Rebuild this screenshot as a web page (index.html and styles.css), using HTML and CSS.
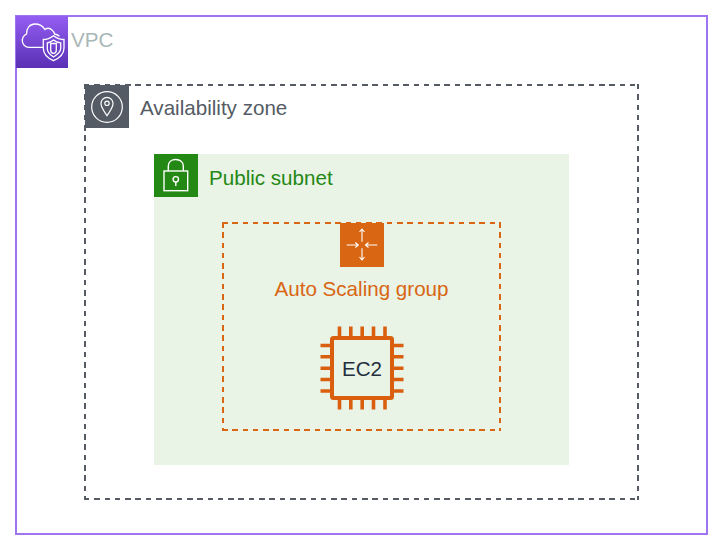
FILE: index.html
```html
<!DOCTYPE html>
<html lang="en">
<head>
<meta charset="utf-8">
<title>VPC diagram</title>
<link rel="stylesheet" href="styles.css">
</head>
<body>
<section class="vpc">
  <header class="head head-vpc">
    <div class="badge badge-vpc">
      <svg viewBox="0 0 52 52" width="52" height="52" fill="none" stroke="#fff" stroke-width="1.3">
        <path d="M27 31.300H13C9 31.300 6.300 28 6.300 24.800C6.300 21.500 8 19.300 10.500 18C10.500 12.500 13.500 8 19 8C23.500 8 26.800 10 29 13.500C31 12 34 12 36 14C37.500 15.200 38.300 16.500 38.500 18C40.500 18.300 42 19 43.500 20.300"/>
        <path d="M37.500 19.700C34.500 22 31.500 23.500 27.300 23.500V32C27.300 38 31.500 42 37.500 44.700C43.500 42 48 38 48 32V23.500C43.500 23.500 40.500 22 37.500 19.700Z"/>
        <path d="M37.500 24C35.500 25.700 33.500 26.600 31.300 26.800V32.500C31.300 36 33.500 38.500 37.500 41C41.500 38.500 44.700 36 44.700 32.500V26.800C42 26.600 39.500 25.700 37.500 24Z"/>
        <path d="M34.700 27.500H40.300V34C40.300 35.900 39.100 37.300 37.500 37.300C35.900 37.300 34.700 35.900 34.700 34Z"/>
      </svg>
    </div>
    <span class="label label-vpc">VPC</span>
  </header>
  <section class="dashed az">
    <header class="head">
      <div class="badge badge-az">
        <svg viewBox="0 0 44 43" width="44" height="43" fill="none" stroke="#fff" stroke-width="1.2">
          <circle cx="22" cy="22" r="15.300"/>
          <path d="M22 30.700C19 26 16 22.500 16 18.500C16 15 18.700 12.300 22 12.300C25.300 12.300 28 15 28 18.500C28 22.500 25 26 22 30.700Z"/>
          <circle cx="22" cy="18.300" r="2.200"/>
        </svg>
      </div>
      <span class="label label-az">Availability zone</span>
    </header>
    <section class="subnet">
      <header class="head">
        <div class="badge badge-subnet">
          <svg viewBox="0 0 44 43" width="44" height="43" fill="none" stroke="#fff" stroke-width="1.4">
            <rect x="10" y="17" width="23.700" height="19.700"/>
            <path d="M14.300 17V12C14.300 8 17.500 5.500 21.800 5.500C26 5.500 29.300 8 29.300 12V17"/>
            <circle cx="21.800" cy="25.300" r="2.700"/>
            <path d="M21.800 28V32"/>
          </svg>
        </div>
        <span class="label label-subnet">Public subnet</span>
      </header>
      <section class="dashed asg">
        <div class="badge badge-asg">
          <svg viewBox="0 0 44 44" width="44" height="44" fill="none" stroke="#fff" stroke-width="1.1">
            <path d="M6.700 22H18.300M15.300 19.500L18.300 22L15.300 24.500"/>
            <path d="M37.300 22H25.500M28.500 19.500L25.500 22L28.500 24.500"/>
            <path d="M22 6V18.700M19.500 9L22 6L24.500 9"/>
            <path d="M22 37V25.300M19.500 34L22 37L24.500 34"/>
          </svg>
        </div>
        <span class="label label-asg">Auto Scaling group</span>
        <div class="chip">
          <svg class="chip-art" viewBox="0 0 84 84" width="84" height="84" fill="none" stroke="#d95f0e">
            <rect x="12" y="12" width="60" height="60" rx="1.500" stroke-width="4"/>
            <path stroke-width="3.600" d="M19.500 0.500V10M30.800 0.500V10M42.200 0.500V10M53.500 0.500V10M65 0.500V10M19.500 74V83.500M30.800 74V83.500M42.200 74V83.500M53.500 74V83.500M65 74V83.500M0.500 19.500H10M0.500 30.800H10M0.500 42.200H10M0.500 53.500H10M0.500 65H10M74 19.500H83.500M74 30.800H83.500M74 42.200H83.500M74 53.500H83.500M74 65H83.500"/>
          </svg>
          <span class="chip-label">EC2</span>
        </div>
      </section>
    </section>
  </section>
</section>
</body>
</html>
```
FILE: styles.css
```css
* { box-sizing: border-box; }
html, body { margin: 0; padding: 0; background: #fff; }
body { font-family: "Liberation Sans", Arial, sans-serif; font-size: 20.6px; width: 723px; height: 545px; overflow: hidden; }
.vpc { width: 693px; height: 520px; margin: 15px 0 0 15px; border: 2px solid #9f74f0; }
.head-vpc { margin: -1px 0 0 -1px; }
.dashed { position: relative; }
.dashed::after {
  content: "";
  position: absolute;
  inset: 0;
  pointer-events: none;
  background:
    repeating-linear-gradient(90deg, var(--dash) 0 5.5px, transparent 5.5px 10.300px) top / 100% 2px no-repeat,
    repeating-linear-gradient(90deg, var(--dash) 0 5.5px, transparent 5.5px 10.300px) bottom / 100% 2px no-repeat,
    repeating-linear-gradient(180deg, var(--dash) 0 5.5px, transparent 5.5px 10.300px) left / 2px 100% no-repeat,
    repeating-linear-gradient(180deg, var(--dash) 0 5.5px, transparent 5.5px 10.300px) right / 2px 100% no-repeat;
}
.az { --dash: #545b64; width: 555px; height: 416px; margin: 16px 0 0 67px; padding: 1px; }
.subnet { width: 415px; height: 311px; margin: 26px 0 0 69px; background: #e9f3e6; }
.asg { --dash: #d86613; width: 279px; height: 209px; margin: 25px 0 0 68px; padding-top: 1px; display: flex; flex-direction: column; align-items: center; }
.head { display: flex; align-items: center; flex: none; }
.badge { flex: none; display: flex; }
.badge-vpc { width: 52px; height: 52px; background: linear-gradient(to top, #5a30b5, #945df2); }
.badge-az { width: 44px; height: 43px; background: #545b64; }
.badge-subnet { width: 44px; height: 43px; background: #248814; }
.badge-asg { width: 44px; height: 44px; background: #d86613; }
.label { line-height: 23px; }
.label-vpc { color: #aab7b8; margin: 0 0 6px 3px; }
.label-az { color: #545b64; margin: 1px 0 0 11px; }
.label-subnet { color: #248814; margin: 3px 0 0 11px; }
.label-asg { color: #d86613; margin-top: 10px; }
.chip { position: relative; width: 84px; height: 84px; margin-top: 26px; display: flex; align-items: center; justify-content: center; }
.chip-art { position: absolute; inset: 0; }
.chip-label { color: #232f3e; line-height: 23px; padding-left: 1px; }
```
